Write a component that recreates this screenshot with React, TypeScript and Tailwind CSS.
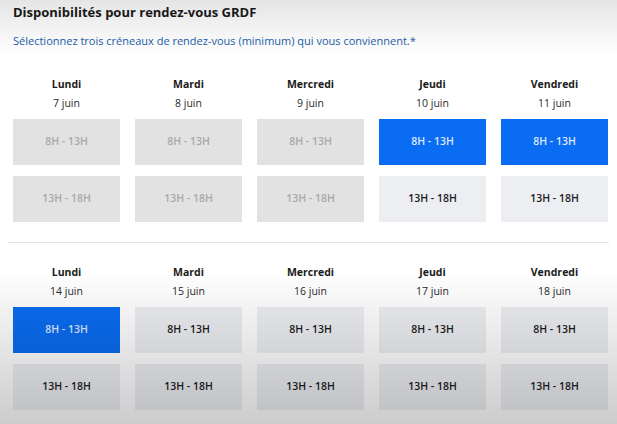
type Slot = "off" | "free" | "on";

interface Day {
    name: string;
    date: string;
    morning: Slot;
    afternoon: Slot;
}

const week1: Day[] = [
    { name: "Lundi", date: "7 juin", morning: "off", afternoon: "off" },
    { name: "Mardi", date: "8 juin", morning: "off", afternoon: "off" },
    { name: "Mercredi", date: "9 juin", morning: "off", afternoon: "off" },
    { name: "Jeudi", date: "10 juin", morning: "on", afternoon: "free" },
    { name: "Vendredi", date: "11 juin", morning: "on", afternoon: "free" },
];

const week2: Day[] = [
    { name: "Lundi", date: "14 juin", morning: "on", afternoon: "free" },
    { name: "Mardi", date: "15 juin", morning: "free", afternoon: "free" },
    { name: "Mercredi", date: "16 juin", morning: "free", afternoon: "free" },
    { name: "Jeudi", date: "17 juin", morning: "free", afternoon: "free" },
    { name: "Vendredi", date: "18 juin", morning: "free", afternoon: "free" },
];

const slotStyles: Record<Slot, string> = {
    off: "bg-[#e2e2e2] text-[#a9a9a9]",
    free: "bg-[#eceef2] text-[#1c1c1c]",
    on: "bg-[#0a6cf2] text-[#dbe8ff]",
};

function SlotBox({ label, state }: { label: string; state: Slot }) {
    return (
        <div className={`h-[46px] flex items-center justify-center text-[10.5px] font-semibold ${slotStyles[state]}`}>
            {label}
        </div>
    );
}

function Week({ days }: { days: Day[] }) {
    return (
        <div className="grid grid-cols-5 gap-x-[15px]">
            {days.map((d) => (
                <div key={d.date} className="flex flex-col">
                    <div className="text-center text-[10.5px] font-bold text-[#1a1a1a] leading-[19px]">{d.name}</div>
                    <div className="text-center text-[10.5px] text-[#2a2a2a] leading-[19px]">{d.date}</div>
                    <div className="mt-[6px] flex flex-col gap-[11px]">
                        <SlotBox label="8H - 13H" state={d.morning} />
                        <SlotBox label="13H - 18H" state={d.afternoon} />
                    </div>
                </div>
            ))}
        </div>
    );
}

export default function App() {
    return (
        <div
            className="relative w-[617px] h-[424px] overflow-hidden bg-white"
            style={{ fontFamily: '"Open Sans", "Noto Sans", sans-serif' }}
        >
            <div className="pl-[13px] pr-[9px]">
                <h1 className="pt-[3px] text-[13px] font-bold text-[#1a1a1a] leading-[18px]">
                    Disponibilités pour rendez-vous GRDF
                </h1>
                <p className="mt-[11px] text-[11px] text-[#1b5eab] leading-[18px]">
                    Sélectionnez trois créneaux de rendez-vous (minimum) qui vous conviennent.*
                </p>
                <div className="mt-[25px]">
                    <Week days={week1} />
                </div>
            </div>
            <div className="mx-[8px] mt-[20px] h-px bg-[#e4e4e4]" />
            <div className="pl-[13px] pr-[9px] mt-[20px]">
                <Week days={week2} />
            </div>
            <div className="pointer-events-none absolute inset-0 bg-[linear-gradient(to_bottom,rgba(0,0,0,0.1)_0px,rgba(0,0,0,0)_55px,rgba(0,0,0,0)_270px,rgba(0,0,0,0.2)_424px)]" />
        </div>
    );
}
